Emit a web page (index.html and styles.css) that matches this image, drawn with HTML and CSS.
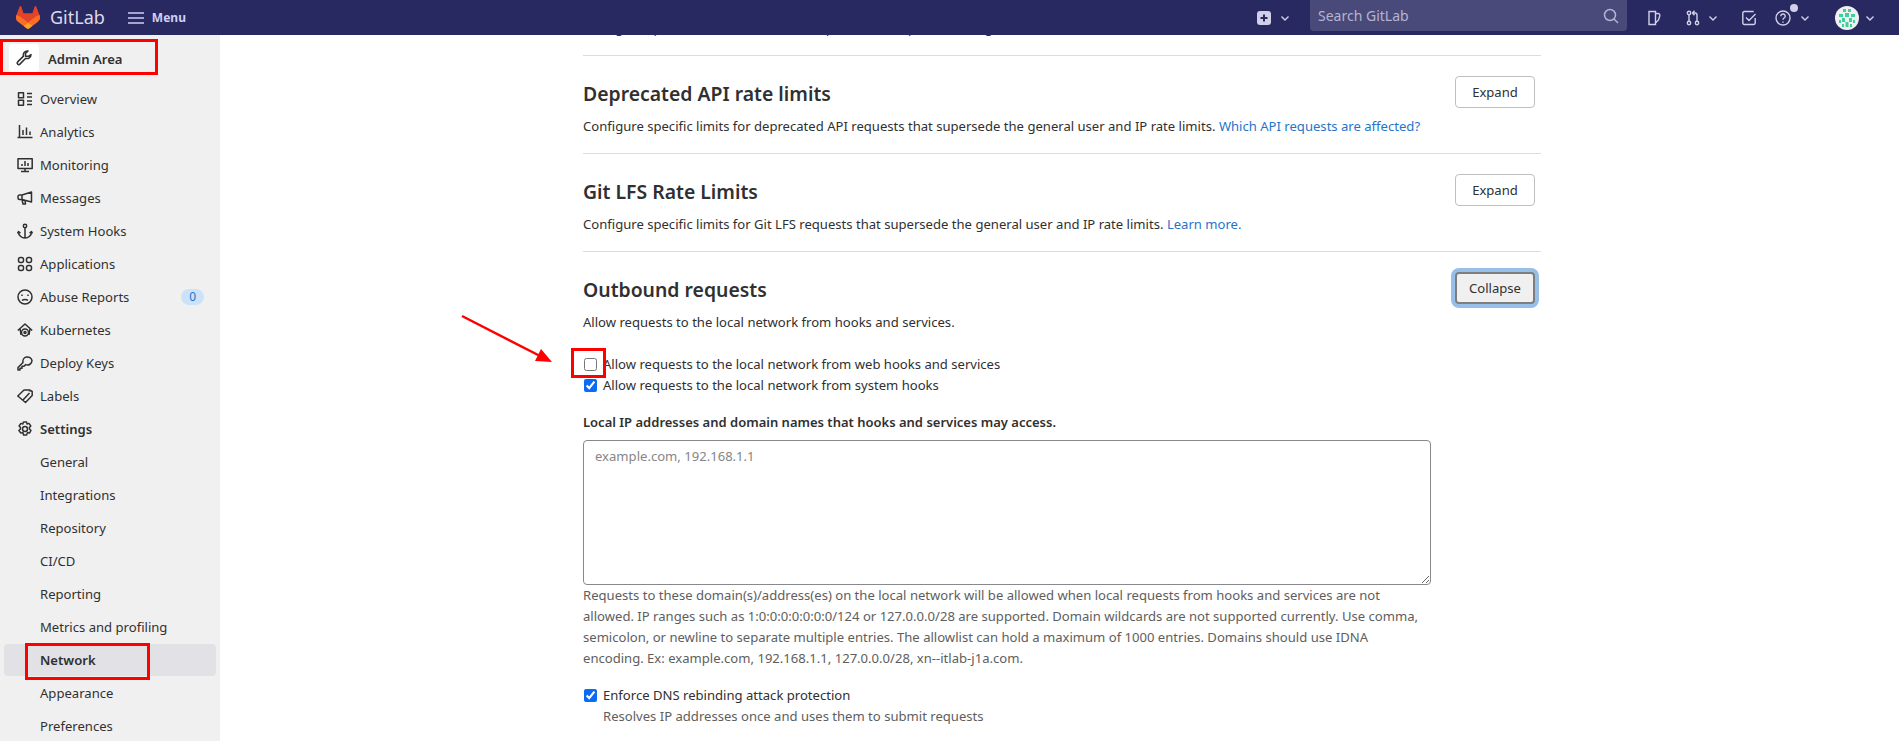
FILE: index.html
```html
<!DOCTYPE html>
<html lang="en">
<head>
    <meta charset="UTF-8">
    <meta name="viewport" content="width=device-width, initial-scale=1.0">
    <title>Network · Settings · Admin Area · GitLab</title>
    <link rel="stylesheet" href="styles.css">
</head>
<body>
    <header class="navbar">
        <div class="brand">
            <svg class="tanuki" viewBox="0 0 25 24">
                <path fill="#E24329" d="M24.507 9.5l-.034-.09L21.082.562a.896.896 0 00-1.694.091l-2.29 7.01H7.825L5.535.653a.898.898 0 00-1.694-.09L.451 9.411.416 9.5a6.297 6.297 0 002.09 7.278l.012.01.03.022 5.16 3.867 2.56 1.935 1.554 1.176a1.051 1.051 0 001.268 0l1.555-1.176 2.56-1.935 5.197-3.89.014-.01A6.297 6.297 0 0024.507 9.5z"/>
                <path fill="#FC6D26" d="M24.507 9.5l-.034-.09a11.44 11.44 0 00-4.56 2.051l-7.447 5.632 4.742 3.584 5.197-3.89.014-.01A6.297 6.297 0 0024.507 9.5z"/>
                <path fill="#FCA326" d="M7.707 20.677l2.56 1.935 1.555 1.176a1.051 1.051 0 001.268 0l1.555-1.176 2.56-1.935-4.743-3.584-4.755 3.584z"/>
                <path fill="#FC6D26" d="M5.01 11.461a11.43 11.43 0 00-4.56-2.05L.416 9.5a6.297 6.297 0 002.09 7.278l.012.01.03.022 5.16 3.867 4.745-3.584-7.444-5.632z"/>
            </svg>
            <span class="brand-name">GitLab</span>
        </div>
        <div class="menu-toggle">
            <svg class="icon" viewBox="0 0 16 16"><path d="M0 3h16M0 8h16M0 13h16"/></svg>
            <span>Menu</span>
        </div>

        <div class="nav-right">
            <svg class="nav-icon plus-icon" viewBox="0 0 16 16"><rect x="1" y="1" width="14" height="14" rx="3" fill="#d1d0e8" stroke="none"/><path d="M8 4.5v7M4.5 8h7" stroke="#292961" stroke-width="2"/></svg>
            <svg class="chevron chevron-plus" viewBox="0 0 10 10"><path d="M1.5 3.5L5 7l3.5-3.5"/></svg>
            <div class="search">
                <span>Search GitLab</span>
                <svg class="icon" viewBox="0 0 16 16"><circle cx="7" cy="7" r="5.5"/><path d="M11 11l4 4"/></svg>
            </div>
            <svg class="nav-icon issues-icon" viewBox="0 0 16 16"><path d="M3 1.5h6.500v13H3zM9.500 3.500h2.500a1.800 1.800 0 011.800 2.200L12.500 10l-3 3"/></svg>
            <svg class="nav-icon mr-icon" viewBox="0 0 16 16"><circle cx="4" cy="3" r="1.700"/><circle cx="4" cy="13" r="1.700"/><circle cx="12" cy="13" r="1.700"/><path d="M4 5v6M12 11V5a2 2 0 00-2-2H8M9.500.8L7.500 3l2 2.200"/></svg>
            <svg class="chevron chevron-mr" viewBox="0 0 10 10"><path d="M1.500 3.500L5 7l3.500-3.500"/></svg>
            <svg class="nav-icon todo-icon" viewBox="0 0 16 16"><path d="M14.200 8v5a1.500 1.500 0 01-1.500 1.500H3.300A1.500 1.500 0 011.800 13V3a1.500 1.500 0 011.500-1.500h9.400M5 7.500l3 3L14.500 4"/></svg>
            <div class="help">
                <svg class="nav-icon" viewBox="0 0 16 16"><circle cx="8" cy="8" r="7"/><path d="M5.800 6.200a2.200 2.200 0 114 1.200c-.7.800-1.800 1.100-1.800 2.300M8 11.500v1.200"/></svg>
                <span class="help-dot"></span>
            </div>
            <svg class="chevron chevron-help" viewBox="0 0 10 10"><path d="M1.500 3.500L5 7l3.500-3.500"/></svg>
            <svg class="avatar" viewBox="0 0 24 24">
                <circle cx="12" cy="12" r="12" fill="#f0f0f0"/>
                <path fill="#3ecf9f" d="M8 3h3v3H8zM13 3h3v3h-3zM4 8h4v3H4zM10 7h4v4h-4zM16 8h4v3h-4zM7 12h3v4H7zM14 12h3v4h-3zM4 14h2v3H4zM18 14h2v3h-2zM10.500 16h3v5h-3zM7 18h2v3H7zM15 18h2v3h-2z"/>
            </svg>
            <svg class="chevron chevron-avatar" viewBox="0 0 10 10"><path d="M1.500 3.500L5 7l3.500-3.500"/></svg>
        </div>
    </header>

    <div class="page">
        <aside class="sidebar">
            <div class="context">
                <span class="context-icon">
                    <svg class="icon" viewBox="0 0 16 16"><path d="M15 4.500a4 4 0 01-5.300 3.800L3.900 14.100a1.600 1.600 0 01-2.200 0 1.600 1.600 0 010-2.200l5.800-5.800A4 4 0 0112 1l-2.500 2.500v2.800h2.800z"/></svg>
                </span>
                <span class="context-name">Admin Area</span>
            </div>
            <nav class="nav-list">
                <a class="nav-item"><svg class="icon" viewBox="0 0 16 16"><path d="M1.500 1.800h5v5h-5zM1.500 9.200h5v5h-5zM10 2.500h5M10 6h5M10 10h5M10 13.500h5"/></svg>Overview</a>
                <a class="nav-item"><svg class="icon" viewBox="0 0 16 16"><path d="M2.500 1v12M.5 13.500h15M6 11V6M9.500 11V3.500M13 11V7.500"/></svg>Analytics</a>
                <a class="nav-item"><svg class="icon" viewBox="0 0 16 16"><path d="M1 1.800h14.200v9.700H1zM8 11.500v3M4 14.500h8M5 9V7M8 9V4M11 9V6"/></svg>Monitoring</a>
                <a class="nav-item"><svg class="icon" viewBox="0 0 16 16"><path d="M14.500 2v10L5 9.500H2.500a1.500 1.500 0 01-1.500-1.500V6.500A1.500 1.500 0 012.500 5H5zM5 5v4.500M5 9.500l1 4.500h2.500L8 10.500"/></svg>Messages</a>
                <a class="nav-item"><svg class="icon" viewBox="0 0 16 16"><circle cx="8" cy="3" r="1.700"/><path d="M8 4.700V15M1.500 9c0 3.500 3 6 6.500 6s6.500-2.500 6.500-6M.5 10.500L1.500 8.500l2 1.500M15.500 10.500l-1-2-2 1.500"/></svg>System Hooks</a>
                <a class="nav-item"><svg class="icon" viewBox="0 0 16 16"><rect x="1.500" y="1.500" width="5" height="5" rx="2"/><rect x="9.500" y="1.500" width="5" height="5" rx="2"/><rect x="1.500" y="9.500" width="5" height="5" rx="2"/><rect x="9.500" y="9.500" width="5" height="5" rx="2"/></svg>Applications</a>
                <a class="nav-item"><svg class="icon" viewBox="0 0 16 16"><circle cx="8" cy="8" r="7"/><path d="M5 11.500c1.500-1.500 4.500-1.500 6 0M5 5.500v1.500M11 5.500v1.500"/></svg>Abuse Reports<span class="badge">0</span></a>
                <a class="nav-item"><svg class="icon" viewBox="0 0 16 16"><path d="M.8 8.500L8 2l7.200 6.500M3 6.500l1 6.500M13 6.500l-1 6.500"/><circle cx="8" cy="10.500" r="3.500"/><circle cx="8" cy="10.500" r="1"/></svg>Kubernetes</a>
                <a class="nav-item"><svg class="icon" viewBox="0 0 16 16"><path d="M15 5.500a4.500 4.500 0 01-6.300 4.100L7 11.300H5v2H3V15H1v-2.500l5-5A4.500 4.500 0 1115 5.500z"/></svg>Deploy Keys</a>
                <a class="nav-item"><svg class="icon" viewBox="0 0 16 16"><path d="M.8 8L7 2h5.500l2.700 1.500v4L8.500 14.500zM6 12l6.500-7M12.500 3v.5"/></svg>Labels</a>
                <a class="nav-item nav-section"><svg class="icon" viewBox="0 0 16 16"><path d="M6.500 1h3l.6 2 1.900-.6L13.800 5l-1.400 1.600.1 1.400 1.500 1.500-1.500 2.600-2-.6-.9 2.500h-3l-.7-2.500-2 .6L1.900 9.500 3.400 8l.1-1.400L2.100 5l1.800-2.600 1.900.6z"/><circle cx="8" cy="8" r="2.500"/></svg>Settings</a>
                <a class="nav-item sub-item">General</a>
                <a class="nav-item sub-item">Integrations</a>
                <a class="nav-item sub-item">Repository</a>
                <a class="nav-item sub-item">CI/CD</a>
                <a class="nav-item sub-item">Reporting</a>
                <a class="nav-item sub-item">Metrics and profiling</a>
                <a class="nav-item sub-item active">Network</a>
                <a class="nav-item sub-item">Appearance</a>
                <a class="nav-item sub-item">Preferences</a>
            </nav>
        </aside>

        <main class="content">
            <section class="settings-cut">
                <p class="section-desc">Configure specific limits for Files API requests that supersede the general user and IP rate limits.</p>
            </section>

            <section class="settings-section">
                <div class="section-head">
                    <h4>Deprecated API rate limits</h4>
                    <button class="btn" type="button">Expand</button>
                </div>
                <p class="section-desc">Configure specific limits for deprecated API requests that supersede the general user and IP rate limits. <a href="#">Which API requests are affected?</a></p>
            </section>

            <section class="settings-section">
                <div class="section-head">
                    <h4>Git LFS Rate Limits</h4>
                    <button class="btn" type="button">Expand</button>
                </div>
                <p class="section-desc">Configure specific limits for Git LFS requests that supersede the general user and IP rate limits. <a href="#">Learn more.</a></p>
            </section>

            <section class="settings-open">
                <div class="section-head">
                    <h4>Outbound requests</h4>
                    <button class="btn btn-focus" type="button">Collapse</button>
                </div>
                <p class="section-desc">Allow requests to the local network from hooks and services.</p>

                <form class="network-form">
                    <label class="check-row">
                        <input type="checkbox">
                        Allow requests to the local network from web hooks and services
                    </label>
                    <label class="check-row">
                        <input type="checkbox" checked>
                        Allow requests to the local network from system hooks
                    </label>

                    <label class="field-label" for="allowlist">Local IP addresses and domain names that hooks and services may access.</label>
                    <textarea id="allowlist" placeholder="example.com, 192.168.1.1"></textarea>
                    <p class="help-text">Requests to these domain(s)/address(es) on the local network will be allowed when local requests from hooks and services are not allowed. IP ranges such as 1:0:0:0:0:0:0:0/124 or 127.0.0.0/28 are supported. Domain wildcards are not supported currently. Use comma, semicolon, or newline to separate multiple entries. The allowlist can hold a maximum of 1000 entries. Domains should use IDNA encoding. Ex: example.com, 192.168.1.1, 127.0.0.0/28, xn--itlab-j1a.com.</p>

                    <label class="check-row check-dns">
                        <input type="checkbox" checked>
                        Enforce DNS rebinding attack protection
                    </label>
                    <p class="check-help">Resolves IP addresses once and uses them to submit requests</p>
                </form>
            </section>
        </main>
    </div>

    <!-- red annotations drawn over the screenshot -->
    <div class="mark mark-admin"></div>
    <div class="mark mark-network"></div>
    <div class="mark mark-checkbox"></div>
    <svg class="mark-arrow" viewBox="0 0 100 60">
        <path d="M2 2L84 44" stroke="#ff0000" stroke-width="2.500" fill="none"/>
        <path d="M92 48L75 47L81 35z" fill="#ff0000"/>
    </svg>
</body>
</html>
```

FILE: styles.css
```css
* {
    box-sizing: border-box;
}

body {
    margin: 0;
    height: 741px;
    overflow: hidden;
    font-family: "Noto Sans", Arial, sans-serif;
    font-size: 13.08px;
    line-height: 21px;
    color: #303030;
    background-color: #fff;
}

svg {
    display: block;
    flex-shrink: 0;
}

.icon {
    width: 16px;
    height: 16px;
    fill: none;
    stroke: currentColor;
    stroke-width: 1.5;
    stroke-linejoin: round;
}

/* top bar */
.navbar {
    position: relative;
    z-index: 2;
    display: flex;
    align-items: center;
    height: 35px;
    padding-left: 16px;
    background-color: #292961;
    color: #d1d0e8;
}

.brand {
    display: flex;
    align-items: center;
}

.tanuki {
    width: 24px;
    height: 23px;
}

.brand-name {
    margin-left: 10px;
    font-size: 18px;
    color: #dcdbe8;
}

.menu-toggle {
    display: flex;
    align-items: center;
    margin-left: 23px;
    font-size: 12px;
    font-weight: 700;
    color: #cfcef5;
}

.menu-toggle .icon {
    margin-right: 8px;
}

.nav-right {
    display: flex;
    align-items: center;
    margin-left: auto;
    padding-right: 24px;
}

.nav-icon {
    width: 16px;
    height: 16px;
    fill: none;
    stroke: #d1d0e8;
    stroke-width: 1.4;
}

.chevron {
    width: 10px;
    height: 10px;
    fill: none;
    stroke: #d1d0e8;
    stroke-width: 1.4;
}

.chevron-plus {
    margin-left: 8px;
}

.search {
    display: flex;
    align-items: center;
    justify-content: space-between;
    width: 317px;
    height: 31px;
    margin: -4px 0 0 20px;
    padding: 0 8px;
    border-radius: 0 0 4px 4px;
    background-color: #4a4a7a;
    color: #b5b4d0;
    font-size: 14px;
}

.issues-icon {
    margin-left: 19px;
}

.mr-icon {
    margin-left: 23px;
}

.chevron-mr {
    margin-left: 7px;
}

.todo-icon {
    margin-left: 23px;
}

.help {
    position: relative;
    margin-left: 18px;
}

.help-dot {
    position: absolute;
    top: -6px;
    right: -7px;
    width: 8px;
    height: 8px;
    border-radius: 50%;
    background-color: #d1d0e8;
}

.chevron-help {
    margin-left: 9px;
}

.avatar {
    width: 24px;
    height: 24px;
    margin-left: 25px;
}

.chevron-avatar {
    margin-left: 6px;
}

/* page */
.page {
    display: flex;
    height: 706px;
}

.sidebar {
    flex: 0 0 220px;
    padding: 9px 4px 0;
    background-color: #f0f0f0;
}

.context {
    display: flex;
    align-items: center;
    height: 28px;
    padding-left: 5px;
    font-weight: 600;
}

.context-name {
    padding-top: 2px;
}

.context-icon {
    display: flex;
    align-items: center;
    justify-content: center;
    width: 30px;
    height: 28px;
    margin-right: 9px;
    border-radius: 4px;
    background-color: #fff;
}

.nav-list {
    display: flex;
    flex-direction: column;
    gap: 1px;
    margin-top: 11px;
}

.nav-item {
    display: flex;
    align-items: center;
    height: 32px;
    padding-left: 13px;
    border-radius: 4px;
    color: #303030;
}

.nav-item .icon {
    margin-right: 7px;
}

.nav-section {
    font-weight: 600;
}

.sub-item {
    padding-left: 36px;
}

.active {
    background-color: #e1e1e6;
    font-weight: 600;
}

.badge {
    margin: 0 12px 0 auto;
    padding: 0 8px;
    height: 16px;
    border-radius: 8px;
    background-color: #cbe2f9;
    color: #1f75cb;
    font-size: 12px;
    line-height: 16px;
}

/* settings */
.content {
    width: 958px;
    margin: -17px 0 0 363px;
}

.settings-cut {
    padding-bottom: 16px;
    border-bottom: 1px solid #dcdcde;
}

.settings-section {
    padding: 20px 0 16px;
    border-bottom: 1px solid #dcdcde;
}

.settings-open {
    padding-top: 20px;
}

.section-head {
    display: flex;
    align-items: center;
    justify-content: space-between;
    height: 32px;
    margin-bottom: 8px;
    padding-right: 6px;
}

h4 {
    margin: 2px 0 0;
    font-size: 19.4px;
    font-weight: 600;
    color: #303030;
}

p {
    margin: 0;
}

a {
    color: #1f75cb;
    text-decoration: none;
}

.btn {
    width: 80px;
    height: 32px;
    padding: 0;
    border: 1px solid #bfbfc3;
    border-radius: 4px;
    background-color: #fff;
    color: #303030;
    font: inherit;
}

.btn-focus {
    border: 2px solid #7e7e7e;
    background-color: #f0f0f0;
    box-shadow: 0 0 0 4px #97bfe8;
}

.network-form {
    margin-top: 21px;
}

.check-row {
    display: flex;
    align-items: center;
}

.check-row input {
    width: 13px;
    height: 13px;
    margin: 0 6px 0 1px;
    accent-color: #0a6cf5;
}

.field-label {
    display: block;
    margin: 16px 0 7px;
    font-size: 13px;
    font-weight: 600;
    color: #303030;
}

textarea {
    display: block;
    width: 848px;
    height: 145px;
    padding: 5px 11px;
    border: 1px solid #89888d;
    border-radius: 4px;
    font: inherit;
}

textarea::placeholder {
    color: #868686;
}

.help-text {
    width: 848px;
    color: #5e5e5e;
}

.check-dns {
    margin-top: 16px;
}

.check-help {
    padding-left: 20px;
    color: #5e5e5e;
}

/* annotations */
.mark {
    position: absolute;
    z-index: 3;
    border: 3px solid #ff0000;
}

.mark-admin {
    left: 0;
    top: 39px;
    width: 158px;
    height: 36px;
}

.mark-network {
    left: 25px;
    top: 643px;
    width: 125px;
    height: 37px;
}

.mark-checkbox {
    left: 571px;
    top: 348px;
    width: 35px;
    height: 30px;
}

.mark-arrow {
    position: absolute;
    z-index: 3;
    left: 460px;
    top: 314px;
    width: 100px;
    height: 60px;
}
```
